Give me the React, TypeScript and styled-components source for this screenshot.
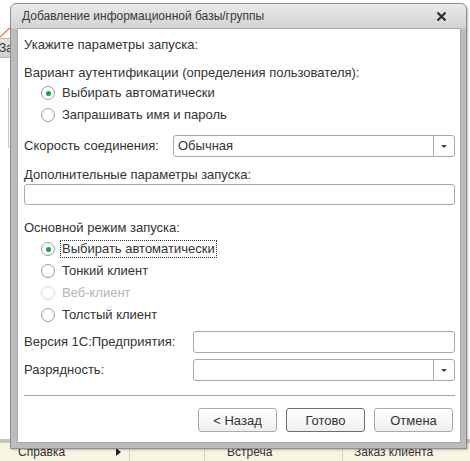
import React from "react";
import styled, { createGlobalStyle, css } from "styled-components";

const GlobalStyle = createGlobalStyle`
  html, body {
    margin: 0;
    padding: 0;
    background: #ffffff;
    font-family: "Liberation Sans", Arial, sans-serif;
  }
`;

const Desktop = styled.div`
  position: relative;
  width: 470px;
  height: 461px;
  overflow: hidden;
  background: #ffffff;
  display: flex;
  flex-direction: column;
`;

const TopArea = styled.div`
  flex: 1;
  position: relative;
`;

const BackTab = styled.div`
  position: absolute;
  left: 0;
  top: 38px;
  width: 14px;
  height: 18px;
  background: linear-gradient(#e4e4e4, #cfcfcf);
  border: 1px solid #b8b8b8;
  border-left: none;
  font-size: 12px;
  color: #333;
  line-height: 18px;
  overflow: hidden;
  white-space: nowrap;
  text-indent: -1px;
`;

const BackLine = styled.div`
  position: absolute;
  left: 8px;
  top: 88px;
  width: 1px;
  height: 60px;
  background: #c8c8c8;
`;

const BottomBand = styled.div`
  height: 4px;
  background: #c9c6b8;
`;

const BottomBar = styled.div`
  height: 18px;
  background: #f7f4e2;
  display: flex;
  align-items: center;
  font-size: 12px;
  color: #333;
`;

const BarCell = styled.div<{ $w: number; $pl: number; $divider?: boolean }>`
  width: ${(p) => p.$w}px;
  padding-left: ${(p) => p.$pl}px;
  box-sizing: border-box;
  height: 100%;
  display: flex;
  align-items: center;
  justify-content: space-between;
  ${(p) =>
    p.$divider &&
    css`
      border-right: 1px solid #d9d4bd;
    `}
`;

const Arrow = styled.span`
  width: 0;
  height: 0;
  border-top: 4px solid transparent;
  border-bottom: 4px solid transparent;
  border-left: 5px solid #222;
  margin-right: 8px;
`;

const Window = styled.div`
  position: absolute;
  left: 10px;
  top: 3px;
  width: 457px;
  height: 446px;
  box-sizing: border-box;
  border: 1px solid #8f8f8f;
  border-radius: 6px 6px 0 0;
  background: linear-gradient(#eaeaea 0px, #d3d3d3 24px, #bcbcbc 25px, #bcbcbc 100%);
  padding: 0 5px 5px 6px;
  display: flex;
  flex-direction: column;
  box-shadow: 1px 1px 2px rgba(0, 0, 0, 0.25);
`;

const TitleBar = styled.div`
  height: 24px;
  flex-shrink: 0;
  display: flex;
  align-items: center;
  justify-content: space-between;
  padding-left: 5px;
  padding-right: 14px;
  font-size: 12px;
  color: #3a3a3a;
`;

const CloseIcon = () => (
  <svg width="11" height="11" viewBox="0 0 11 11">
    <path d="M1.5 1.5 L9.5 9.5 M9.5 1.5 L1.5 9.5" stroke="#2e2e2e" strokeWidth="2.2" />
  </svg>
);

const Body = styled.div`
  flex: 1;
  background: #ffffff;
  border: 1px solid #a8a8a8;
  padding: 8px 5px 0 6px;
  display: flex;
  flex-direction: column;
  font-size: 13px;
  color: #333;
  & > * {
    flex-shrink: 0;
  }
`;

const Label = styled.div<{ $mt?: number }>`
  line-height: 16px;
  height: 16px;
  margin-top: ${(p) => p.$mt ?? 0}px;
  white-space: nowrap;
`;

const RadioGroup = styled.div<{ $mt?: number }>`
  display: flex;
  flex-direction: column;
  margin-top: ${(p) => p.$mt ?? 0}px;
  padding-left: 17px;
`;

const RadioRow = styled.div<{ $disabled?: boolean }>`
  height: 22px;
  display: flex;
  align-items: center;
  gap: 7px;
  color: ${(p) => (p.$disabled ? "#b4b4b4" : "#333")};
`;

const Circle = styled.span<{ $checked?: boolean; $disabled?: boolean }>`
  width: 14px;
  height: 14px;
  box-sizing: border-box;
  border-radius: 50%;
  border: 1px solid ${(p) => (p.$disabled ? "#d6d6d6" : "#9a9a9a")};
  background: #fff;
  display: flex;
  align-items: center;
  justify-content: center;
  &::after {
    content: "";
    width: 5px;
    height: 5px;
    border-radius: 50%;
    background: ${(p) => (p.$checked ? "#1e9c57" : "transparent")};
  }
`;

const RadioText = styled.span<{ $focused?: boolean }>`
  line-height: 16px;
  padding: 0 1px;
  border: 1px dotted ${(p) => (p.$focused ? "#333" : "transparent")};
  margin-left: -2px;
`;

const FieldRow = styled.div<{ $mt?: number; $labelW: number }>`
  display: grid;
  grid-template-columns: ${(p) => p.$labelW}px 1fr;
  align-items: center;
  margin-top: ${(p) => p.$mt ?? 0}px;
`;

const Box = styled.div<{ $h: number; $mt?: number }>`
  height: ${(p) => p.$h}px;
  box-sizing: border-box;
  border: 1px solid #a9a9a9;
  border-radius: 3px;
  background: #fff;
  display: flex;
  align-items: center;
  margin-top: ${(p) => p.$mt ?? 0}px;
`;

const BoxText = styled.span`
  flex: 1;
  padding-left: 4px;
  line-height: 16px;
`;

const DropButton = styled.span`
  width: 20px;
  height: 100%;
  border-left: 1px solid #a9a9a9;
  display: flex;
  align-items: center;
  justify-content: center;
  &::after {
    content: "";
    border-left: 3px solid transparent;
    border-right: 3px solid transparent;
    border-top: 3px solid #444;
  }
`;

const Separator = styled.div`
  height: 1px;
  background: #a6a6a6;
  margin-top: 14px;
`;

const Buttons = styled.div`
  display: flex;
  justify-content: flex-end;
  gap: 9px;
  margin-top: 12px;
  padding-right: 2px;
`;

const Button = styled.button<{ $default?: boolean }>`
  width: 79px;
  height: 24px;
  box-sizing: border-box;
  border: 1px solid ${(p) => (p.$default ? "#6e6e6e" : "#ababab")};
  border-radius: 3px;
  background: linear-gradient(#ffffff, #efefef);
  font-family: "Liberation Sans", Arial, sans-serif;
  font-size: 13px;
  color: #333;
  padding: 0;
`;

const Corner = () => (
  <svg width="12" height="14" viewBox="0 0 12 14" style={{ position: "absolute", left: 0, top: 24 }}>
    <path d="M0 13 L12 2" stroke="#e0714a" strokeWidth="1.2" fill="none" />
  </svg>
);

export default function App() {
  return (
    <>
      <GlobalStyle />
      <Desktop>
        <TopArea>
          <Corner />
          <BackTab>За</BackTab>
          <BackLine />
        </TopArea>
        <BottomBand />
        <BottomBar>
          <BarCell $w={130} $pl={18} $divider>
            Справка
            <Arrow />
          </BarCell>
          <BarCell $w={75} $pl={0} $divider />
          <BarCell $w={138} $pl={22} $divider>
            Встреча
          </BarCell>
          <BarCell $w={127} $pl={11}>
            Заказ клиента
          </BarCell>
        </BottomBar>

        <Window>
          <TitleBar>
            <span>Добавление информационной базы/группы</span>
            <CloseIcon />
          </TitleBar>
          <Body>
            <Label>Укажите параметры запуска:</Label>
            <Label $mt={12}>Вариант аутентификации (определения пользователя):</Label>
            <RadioGroup $mt={1}>
              <RadioRow>
                <Circle $checked />
                <RadioText>Выбирать автоматически</RadioText>
              </RadioRow>
              <RadioRow>
                <Circle />
                <RadioText>Запрашивать имя и пароль</RadioText>
              </RadioRow>
            </RadioGroup>
            <FieldRow $mt={9} $labelW={149}>
              <Label>Скорость соединения:</Label>
              <Box $h={22}>
                <BoxText>Обычная</BoxText>
                <DropButton />
              </Box>
            </FieldRow>
            <Label $mt={10}>Дополнительные параметры запуска:</Label>
            <Box $h={21} $mt={1} />
            <Label $mt={15}>Основной режим запуска:</Label>
            <RadioGroup $mt={2}>
              <RadioRow>
                <Circle $checked />
                <RadioText $focused>Выбирать автоматически</RadioText>
              </RadioRow>
              <RadioRow>
                <Circle />
                <RadioText>Тонкий клиент</RadioText>
              </RadioRow>
              <RadioRow $disabled>
                <Circle $disabled />
                <RadioText>Веб-клиент</RadioText>
              </RadioRow>
              <RadioRow>
                <Circle />
                <RadioText>Толстый клиент</RadioText>
              </RadioRow>
            </RadioGroup>
            <FieldRow $mt={5} $labelW={169}>
              <Label>Версия 1С:Предприятия:</Label>
              <Box $h={22} />
            </FieldRow>
            <FieldRow $mt={6} $labelW={169}>
              <Label>Разрядность:</Label>
              <Box $h={22}>
                <BoxText />
                <DropButton />
              </Box>
            </FieldRow>
            <Separator />
            <Buttons>
              <Button>&lt; Назад</Button>
              <Button $default>Готово</Button>
              <Button>Отмена</Button>
            </Buttons>
          </Body>
        </Window>
      </Desktop>
    </>
  );
}
